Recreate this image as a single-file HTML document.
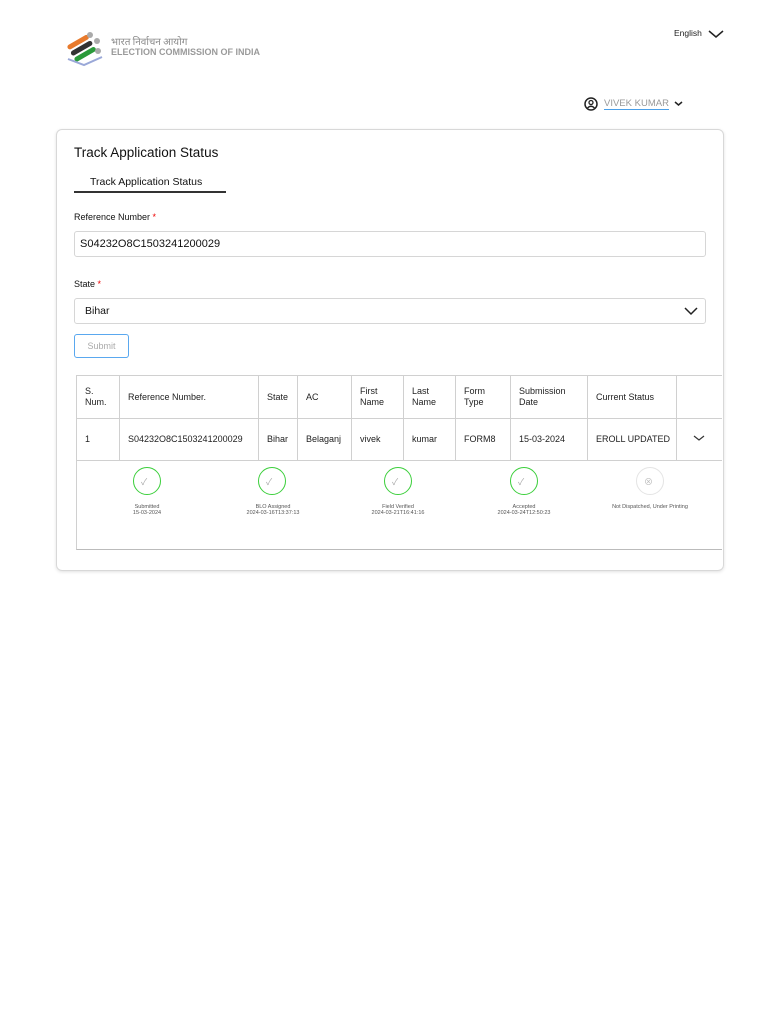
<!DOCTYPE html>
<html><head><meta charset="utf-8"><style>
*{box-sizing:border-box;margin:0;padding:0}
body{width:768px;height:1024px;background:#fff;font-family:"Liberation Sans","Noto Sans CJK SC",sans-serif;color:#111;position:relative;overflow:hidden}
.a{position:absolute}
.card{left:56px;top:129px;width:668px;height:442px;border:1px solid #d8d8d8;border-radius:6px;box-shadow:0 1px 3px rgba(0,0,0,.12)}
.inp{border:1px solid #d6d6d6;border-radius:3px;left:74px;width:632px;height:26px;font-size:11px;padding-left:5px;line-height:24px}
table{border-collapse:collapse;font-size:9px;color:#222;table-layout:fixed}
td{border:1px solid #d0d0d0;padding:0 8px;vertical-align:middle;line-height:11px;white-space:nowrap;overflow:hidden}
.st{font-size:5.5px;color:#555;text-align:center;line-height:6px;width:110px}
.c{width:28px;height:28px;border:1.5px solid #3ccf3c;border-radius:50%}
</style></head><body>
<svg class="a" style="left:64px;top:29px" width="42" height="38" viewBox="0 0 42 38">
<g transform="rotate(-30 21 19)">
<rect x="6" y="8" width="24" height="5" rx="2.5" fill="#e87a2c"/>
<rect x="6" y="15" width="24" height="5" rx="2.5" fill="#333"/>
<rect x="6" y="22" width="24" height="5" rx="2.5" fill="#2a9a3a"/>
</g>
<circle cx="26" cy="6" r="3" fill="#aaa"/><circle cx="33" cy="12" r="3" fill="#aaa"/><circle cx="34" cy="22" r="3" fill="#aaa"/>
<path d="M4 30 L20 36 L38 28" stroke="#9aa8d8" stroke-width="2" fill="none"/>
</svg>
<div class="a" style="left:111px;top:33px;font-size:10px;color:#8a8a8a;font-family:'Noto Sans CJK SC',sans-serif">भारत निर्वाचन आयोग</div>
<div class="a" style="left:111px;top:47px;font-size:9px;color:#9a9a9a;font-weight:bold">ELECTION COMMISSION OF INDIA</div>
<div class="a" style="left:674px;top:28px;font-size:8.5px;color:#222">English</div>
<svg class="a" style="left:708px;top:29px" width="16" height="10"><path d="M1 2 L8 8 L15 2" stroke="#222" stroke-width="1.5" fill="none"/></svg>
<svg class="a" style="left:584px;top:97px" width="14" height="14" viewBox="0 0 14 14"><circle cx="7" cy="7" r="6" stroke="#222" stroke-width="1.5" fill="none"/><circle cx="7" cy="5.5" r="2" stroke="#222" stroke-width="1.3" fill="none"/><path d="M3.5 11 Q7 7.5 10.5 11" stroke="#222" stroke-width="1.3" fill="none"/></svg>
<div class="a" style="left:604px;top:98px;font-size:9.5px;color:#999;border-bottom:1.5px solid #4a9fe8;line-height:11px">VIVEK KUMAR</div>
<svg class="a" style="left:674px;top:100px" width="9" height="7"><path d="M1 2 L4.5 5 L8 2" stroke="#222" stroke-width="1.5" fill="none"/></svg>
<div class="a card"></div>
<div class="a" style="left:74px;top:145px;font-size:13.5px;color:#111">Track Application Status</div>
<div class="a" style="left:90px;top:176px;font-size:10.5px;color:#111">Track Application Status</div>
<div class="a" style="left:74px;top:191px;width:152px;height:1.5px;background:#333"></div>
<div class="a" style="left:74px;top:212px;font-size:9px">Reference Number <span style="color:#e00">*</span></div>
<div class="a inp" style="top:231px;color:#111">S04232O8C1503241200029</div>
<div class="a" style="left:74px;top:279px;font-size:9px">State <span style="color:#e00">*</span></div>
<div class="a inp" style="top:298px;padding-left:10px;font-size:10.5px">Bihar</div>
<svg class="a" style="left:683px;top:305px" width="16" height="12"><path d="M2 3 L8 9 L14 3" stroke="#222" stroke-width="1.5" fill="none"/></svg>
<div class="a" style="left:74px;top:334px;width:55px;height:24px;border:1px solid #5aa8ef;border-radius:3px;font-size:9px;color:#aaa;text-align:center;line-height:22px">Submit</div>
<div class="a" style="left:76px;top:375px;width:646px;height:175px;border-left:1px solid #d0d0d0;border-bottom:1.5px solid #bbb;overflow:hidden">
<table style="margin-left:-1px;width:660px">
<colgroup><col style="width:43px"><col style="width:139px"><col style="width:39px"><col style="width:54px"><col style="width:52px"><col style="width:52px"><col style="width:55px"><col style="width:77px"><col style="width:89px"><col></colgroup>
<tr style="height:43px"><td>S.<br>Num.</td><td>Reference Number.</td><td>State</td><td>AC</td><td>First<br>Name</td><td>Last<br>Name</td><td>Form<br>Type</td><td>Submission<br>Date</td><td>Current Status</td><td></td></tr>
<tr style="height:42px"><td>1</td><td>S04232O8C1503241200029</td><td>Bihar</td><td>Belaganj</td><td>vivek</td><td>kumar</td><td>FORM8</td><td>15-03-2024</td><td>EROLL UPDATED</td><td style="padding-left:16px"><svg width="12" height="8"><path d="M1 2 L6 6 L11 2" stroke="#333" stroke-width="1.2" fill="none"/></svg></td></tr>
</table>
</div>
<div class="a c" style="left:133px;top:467px"></div>
<div class="a c" style="left:258px;top:467px"></div>
<div class="a c" style="left:384px;top:467px"></div>
<div class="a c" style="left:510px;top:467px"></div>
<div class="a c" style="left:636px;top:467px;border-color:#e4e4e4"></div>
<div class="a" style="left:141px;top:475px;font-size:9px;color:#aaa">✓</div>
<div class="a" style="left:266px;top:475px;font-size:9px;color:#aaa">✓</div>
<div class="a" style="left:392px;top:475px;font-size:9px;color:#aaa">✓</div>
<div class="a" style="left:518px;top:475px;font-size:9px;color:#aaa">✓</div>
<div class="a" style="left:644px;top:475px;font-size:9px;color:#bbb">⊗</div>
<div class="a st" style="left:92px;top:504px">Submitted<br>15-03-2024</div>
<div class="a st" style="left:218px;top:504px">BLO Assigned<br>2024-03-16T13:37:13</div>
<div class="a st" style="left:343px;top:504px">Field Verified<br>2024-03-21T16:41:16</div>
<div class="a st" style="left:469px;top:504px">Accepted<br>2024-03-24T12:50:23</div>
<div class="a st" style="left:595px;top:504px">Not Dispatched, Under Printing</div>
</body></html>
